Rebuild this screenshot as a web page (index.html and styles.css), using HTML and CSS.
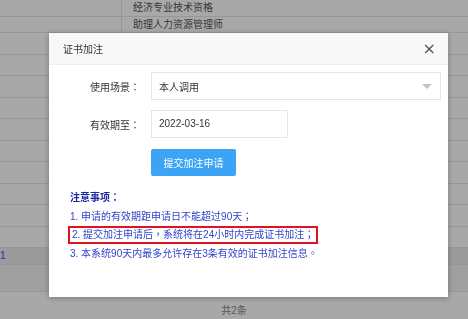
FILE: index.html
```html
<!DOCTYPE html>
<html lang="zh-CN">
<head>
  <meta charset="UTF-8">
  <title>证书加注</title>
  <link rel="stylesheet" href="styles.css">
</head>
<body>
  <!-- page behind the dialog -->
  <div class="page">
    <div class="row row-top"><div class="cell-l"></div><div class="cell-r">经济专业技术资格</div></div>
    <div class="row row-top"><div class="cell-l"></div><div class="cell-r">助理人力资源管理师</div></div>
    <div class="row"><div class="cell-l"></div><div class="cell-r"></div></div>
    <div class="row"><div class="cell-l"></div><div class="cell-r"></div></div>
    <div class="row"><div class="cell-l"></div><div class="cell-r"></div></div>
    <div class="row"><div class="cell-l"></div><div class="cell-r"></div></div>
    <div class="row"><div class="cell-l"></div><div class="cell-r"></div></div>
    <div class="row"><div class="cell-l"></div><div class="cell-r"></div></div>
    <div class="row"><div class="cell-l"></div><div class="cell-r"></div></div>
    <div class="row"><div class="cell-l"></div><div class="cell-r"></div></div>
    <div class="row"><div class="cell-l"></div><div class="cell-r"></div></div>
    <div class="row"><div class="cell-l"></div><div class="cell-r"></div></div>
    <div class="row row-dark"><div class="cell-l link">1</div><div class="cell-r"></div></div>
    <div class="row row-mid"><div class="cell-l"></div><div class="cell-r"></div></div>
    <div class="foot">共2条</div>
  </div>

  <div class="overlay"></div>

  <!-- Modal -->
  <div class="modal">
    <div class="modal-head">
      <span class="modal-title">证书加注</span>
      <span class="close">&times;</span>
    </div>
    <div class="modal-body">
      <div class="form-row">
        <label class="label" lang="zh-TW">使用场景：</label>
        <div class="select">
          <span>本人调用</span>
          <span class="caret"></span>
        </div>
      </div>
      <div class="form-row">
        <label class="label" lang="zh-TW">有效期至：</label>
        <div class="input">2022-03-16</div>
      </div>
      <div class="form-row">
        <span class="label"></span>
        <button class="btn">提交加注申请</button>
      </div>
      <div class="notes" lang="zh-TW">
        <p class="notes-title">注意事项：</p>
        <p>1. 申请的有效期距申请日不能超过90天；</p>
        <p><span class="mark">2. 提交加注申请后，系统将在24小时内完成证书加注；</span></p>
        <p>3. 本系统90天内最多允许存在3条有效的证书加注信息。</p>
      </div>
    </div>
  </div>
</body>
</html>
```

FILE: styles.css
```css
*{box-sizing:border-box;margin:0;padding:0;}
html,body{height:100%;}
body{
  font-family:'Liberation Sans','Noto Sans CJK SC',sans-serif;
  font-size:10px;
  color:#333;
  background:#fff;
  overflow:hidden;
}

/* ------- PAGE BEHIND ------- */
.page{width:468px;}
.row{display:flex;height:21.5px;border-bottom:1px solid #e6e6e6;}
.row-top{height:16.5px;}
.row-dark{height:17px;background:#ececec;}
.row-mid{height:27px;background:#f3f3f3;}
.cell-l{width:122px;border-right:1px solid #e6e6e6;}
.cell-r{flex:1;padding-left:11px;line-height:16px;color:#555;}
.link{color:#2d5bd6;line-height:16px;}
.foot{text-align:center;color:#888;padding-top:10px;}

.overlay{position:fixed;inset:0;background:rgba(0,0,0,.34);}

/* ------- MODAL ------- */
.modal{
  position:fixed;left:49px;top:33px;
  width:399px;height:264px;
  background:#fff;
  box-shadow:0 1px 6px rgba(0,0,0,.3);
}
.modal-head{
  height:32px;
  display:flex;align-items:center;justify-content:space-between;
  padding:0 12px 0 14px;
  background:#f8f8f8;
  border-bottom:1px solid #eee;
}
.modal-title{color:#333;}
.close{font-size:16px;color:#555;line-height:1;font-family:'DejaVu Sans',sans-serif;}

.modal-body{padding-top:7px;}
.form-row{display:flex;align-items:center;gap:11px;margin-bottom:10px;}
.label{width:91px;text-align:right;color:#333;font-family:'Liberation Sans','Noto Sans CJK TC',sans-serif;}
.select{
  width:290px;height:28px;
  display:flex;align-items:center;justify-content:space-between;
  padding:0 8px 0 7px;
  border:1px solid #e6e6e6;
}
.caret{
  width:0;height:0;
  border-left:5px solid transparent;border-right:5px solid transparent;
  border-top:5px solid #c2c2c2;
}
.input{
  width:137px;height:28px;line-height:26px;
  padding-left:7px;
  border:1px solid #e6e6e6;
}
.btn{
  width:85px;height:27px;margin-top:1px;
  background:#3ba4f4;color:#fff;
  border:none;border-radius:2px;
  font:inherit;
}

.notes{padding:3px 0 0 21px;color:#3344c8;font-family:'Liberation Sans','Noto Sans CJK TC',sans-serif;}
.notes p{line-height:18.5px;}
.notes-title{font-weight:bold;color:#1d2a9e;}
.mark{display:inline-block;margin-left:-2px;padding:0 2px;border:2px solid #e0141e;line-height:14px;}
```
